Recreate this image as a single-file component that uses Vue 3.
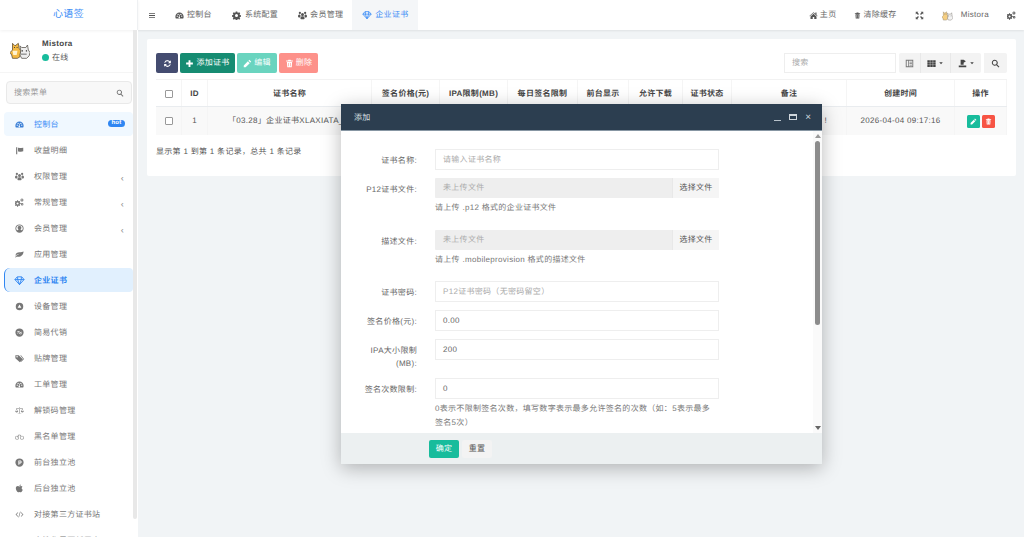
<script setup>
const P = {
  bars: 'M3 5h18v2.6H3zM3 10.7h18v2.6H3zM3 16.400h18V19H3z',
  dash: 'M12 4C5.900 4 1 8.900 1 15c0 1.800.4 3.400 1.200 5h19.600c.8-1.600 1.200-3.200 1.200-5 0-6.100-4.900-11-11-11zM6 15.500a1.700 1.700 0 1 1 0-3.400 1.700 1.700 0 0 1 0 3.400zm2.300-4.800a1.700 1.700 0 1 1 0-3.400 1.700 1.700 0 0 1 0 3.400zm5.300 6.300a2.200 2.200 0 1 1-3-2.100l1.300-5.500 1.500.4-1.300 5.300c.9.300 1.500 1 1.500 1.900zm2-6.300a1.700 1.700 0 1 1 0-3.400 1.700 1.700 0 0 1 0 3.400zm2.400 4.800a1.700 1.700 0 1 1 0-3.400 1.700 1.700 0 0 1 0 3.400z',
  gear: 'M10 1h4l.6 3 2 .9 2.600-1.700 2.800 2.800-1.700 2.600.8 2 3 .6v4l-3 .6-.8 2 1.700 2.600-2.800 2.800-2.600-1.700-2 .8-.6 3h-4l-.6-3-2-.8-2.600 1.700-2.800-2.800 1.700-2.600-.8-2-3-.6v-4l3-.6.8-2L2 6l2.800-2.800 2.600 1.700 2-.9zM12 8a4 4 0 1 0 0 8 4 4 0 0 0 0-8z',
  users: 'M12 5a4 4 0 1 1 0 8 4 4 0 0 1 0-8zM5 2a3 3 0 1 1 0 6 3 3 0 0 1 0-6zM19 2a3 3 0 1 1 0 6 3 3 0 0 1 0-6zM0 14c0-3 1.500-5 3.500-5 .8 0 1.600.3 2.200.9C6 12 7 13 8 13.500 6.500 14 5.500 15.300 5.300 17H2c-1.300 0-2-1-2-3zm24 0c0 2-.7 3-2 3h-3.300c-.2-1.700-1.200-3-2.700-3.500 1-.5 2-1.500 2.300-3.600.6-.6 1.400-.9 2.200-.9 2 0 3.500 2 3.500 5zM6.500 20c0-3.500 1.500-6 4-6h3c2.500 0 4 2.500 4 6 0 1.500-1 2-2 2h-7c-1 0-2-.5-2-2z',
  flag: 'M3 3h3v19H3zM8 5c3-1.200 5 .8 8 .2l6-.7v9.800l-6 .7c-3 .6-5-1.400-8-.2z',
  cogs: 'M8 6l.5 2 1.600.7 1.800-1 1.700 1.700-1 1.800.7 1.600 2 .5v2.400l-2 .5-.7 1.600 1 1.800-1.700 1.700-1.800-1-1.600.7-.5 2H5.600l-.5-2-1.600-.7-1.800 1L0 19.700l1-1.800-.7-1.600-2-.5v-2.400l2-.5.7-1.600-1-1.800 1.700-1.700 1.800 1 1.600-.7.5-2zm-1.200 6a2.800 2.800 0 1 0 0 5.600 2.800 2.800 0 0 0 0-5.600zM18.500 1a4 4 0 1 1 0 8 4 4 0 0 1 0-8zm0 2.600a1.400 1.400 0 1 0 0 2.800 1.400 1.400 0 0 0 0-2.800zM19 13a3.500 3.500 0 1 1 0 7 3.500 3.500 0 0 1 0-7zm0 2.300a1.200 1.200 0 1 0 0 2.400 1.200 1.200 0 0 0 0-2.400z',
  ucircle: 'M12 1a11 11 0 1 1 0 22 11 11 0 0 1 0-22zm0 2.300a8.700 8.700 0 0 0-6.700 14.300C6.300 15.800 8 15 9.500 14.500a5 5 0 1 1 5 0c1.500.5 3.200 1.300 4.200 3.100A8.700 8.700 0 0 0 12 3.300z',
  leaf: 'M23 4c-1 8-5 13-12 14-3 .4-5-.2-6-1-1 1-2 2-3 3l-1.500-1c2-3 6-7 12-9-5 .4-9 3-11 5C1 9 6 6 12 6c5 0 8-.5 11-2z',
  gem: 'M7 4h10l5 6-10 11L2 10zM2 10h20M8 10l4 11 4-11M8 4.500L8 10M16 4.500V10',
  circ: 'M12 2a10 10 0 1 1 0 20 10 10 0 0 1 0-20zm0 4.500l-5 9h10z',
  simple: 'M12 1a11 11 0 1 1 0 22 11 11 0 0 1 0-22zM6 9.500c2-2 4-2 6 0s4 2 6 0v2c-2 2-4 2-6 0s-4-2-6 0zM6 13.500c2-2 4-2 6 0s4 2 6 0v1.500c-2 2-4 2-6 0s-4-2-6 0z',
  tags: 'M1 3h9l11 11-8 8L1 11zM5.500 5.500a2 2 0 1 0 0 4 2 2 0 0 0 0-4z',
  tags2: 'M14 3h2l8 10.500-7 7-1.500-1.500 6-6z',
  scale: 'M11.300 3h1.400v16h4v1.300h-9.400V19h4zM3 6h18v1H3zM4.500 7l3.400 7h-1l-2.400-5-2.400 5h-1zM19.500 7l3.400 7h-1l-2.400-5-2.400 5h-1zM.5 14h8a4 3 0 0 1-8 0zM15.500 14h8a4 3 0 0 1-8 0z',
  bike: 'M5.500 10a5 5 0 1 1 0 10 5 5 0 0 1 0-10zm0 1.400a3.600 3.600 0 1 0 0 7.200 3.600 3.600 0 0 0 0-7.200zM18.500 10a5 5 0 1 1 0 10 5 5 0 0 1 0-10zm0 1.400a3.600 3.600 0 1 0 0 7.200 3.600 3.600 0 0 0 0-7.200zM9 7h5l3 5-1.200.7L13 8.400H10l-3 6-1.200-.7z',
  pcirc: 'M12 1a11 11 0 1 1 0 22 11 11 0 0 1 0-22zM9 6.500V18h2.600v-3.500h2c2.600 0 4-1.500 4-4s-1.400-4-4-4zm2.600 2.300h1.800c1.100 0 1.700.6 1.700 1.700s-.6 1.700-1.700 1.700h-1.800z',
  apple: 'M16 1c.1 2-1.700 4.400-4 4.300C11.800 3.200 13.800 1.200 16 1zM12 6.500c1 0 2.300-1 4-1 1.500 0 3 .7 4 2-3.300 2-2.700 6.600.8 8-.9 2.500-3 6.500-5 6.500-1.500 0-2-1-3.800-1s-2.300 1-3.800 1c-2.700 0-6-6-6-10.500 0-4 2.600-6 5-6 1.900 0 3.600 1 4.800 1z',
  code: 'M7.500 6l1 1.200L4 12l4.500 4.800-1 1.200L1.500 12zM16.500 6l-1 1.200L20 12l-4.500 4.800 1 1.200 6-6zM13.500 4l1.400.4-4.400 15.600-1.400-.4z',
  home: 'M12 3l5 4.500V4h3v6.200l3 2.800-1.200 1.300L12 5.500 2.200 14.300 1 13zM12 7.500l8 7V21h-6v-5h-4v5H4v-6.500z',
  trash: 'M9 2h6l1 2h5v2.500H3V4h5zM5 8h14l-1 14H6zM9 10.500v9h1.500v-9zm4.500 0v9H15v-9z',
  arrows: 'M2 2h7L6.700 4.300 10.500 8 8 10.500 4.300 6.700 2 9zM22 2v7l-2.300-2.300L16 10.500 13.500 8l3.800-3.700L15 2zM2 22v-7l2.300 2.300L8 13.500l2.500 2.500-3.800 3.700L9 22zM22 22h-7l2.300-2.300-3.800-3.700 2.500-2.500 3.700 3.800L22 15z',
  refresh: 'M12 3c2.600 0 4.900 1.100 6.500 2.800L21 3.500V11h-7.500l3-3A6.500 6.500 0 0 0 5.800 10H3.200A9 9 0 0 1 12 3zM3 13h7.500l-3 3a6.500 6.500 0 0 0 10.700-2h2.600A9 9 0 0 1 5.500 18.200L3 20.500z',
  plus: 'M9.500 3h5v6.500H21v5h-6.500V21h-5v-6.500H3v-5h6.500z',
  pencil: 'M17 2l5 5-2.500 2.500-5-5zM13 6l5 5L7 22H2v-5z',
  table: 'M2 2h20v20H2zm2.500 2.500v15h4v-15zm6 0v15h9v-15z M12 7h6.500v2H12zM12 11h6.500v2H12zM12 15h6.500v2H12z',
  grid: 'M1 3h6.600v5.500H1zM8.700 3h6.600v5.500H8.700zM16.400 3H23v5.500h-6.600zM1 9.500h6.600V15H1zM8.700 9.500h6.600V15H8.700zM16.400 9.500H23V15h-6.600zM1 16h6.600v5.500H1zM8.700 16h6.600v5.500H8.700zM16.400 16H23v5.500h-6.600z',
  exp: 'M7 2h8l6 4-6 4v5h-8zM2 17h20v5H2z',
  search: 'M10 2a8 8 0 0 1 6.400 12.800l6 6-2.100 2.100-6-6A8 8 0 1 1 10 2zm0 2.800a5.200 5.200 0 1 0 0 10.400 5.200 5.200 0 0 0 0-10.400z',
  caret: 'M5 9h14l-7 8z'
}

const menu = [
  { t: '控制台', i: 'dash', hot: true, cls: 'soft' },
  { t: '收益明细', i: 'flag' },
  { t: '权限管理', i: 'users', arrow: true },
  { t: '常规管理', i: 'cogs', arrow: true },
  { t: '会员管理', i: 'ucircle', arrow: true },
  { t: '应用管理', i: 'leaf' },
  { t: '企业证书', i: 'gem', cls: 'active', stroke: true },
  { t: '设备管理', i: 'circ' },
  { t: '简易代销', i: 'simple' },
  { t: '贴牌管理', i: 'tags', extra: 'tags2' },
  { t: '工单管理', i: 'dash' },
  { t: '解锁码管理', i: 'scale' },
  { t: '黑名单管理', i: 'bike' },
  { t: '前台独立池', i: 'pcirc' },
  { t: '后台独立池', i: 'apple' },
  { t: '对接第三方证书站', i: 'code' },
  { t: '个性化界面新用户', i: 'code' }
]

const columns = [
  { w: 26, t: '', check: true },
  { w: 26, t: 'ID', v: '1' },
  { w: 164, t: '证书名称', v: '「03.28」企业证书XLAXIATA_', left: true },
  { w: 68, t: '签名价格(元)', v: '' },
  { w: 68, t: 'IPA限制(MB)', v: '' },
  { w: 70, t: '每日签名限制', v: '' },
  { w: 51, t: '前台显示', v: '' },
  { w: 54, t: '允许下载', v: '' },
  { w: 49, t: '证书状态', v: '' },
  { w: 115, t: '备注', v: '!', right: true },
  { w: 108, t: '创建时间', v: '2026-04-04 09:17:16' },
  { w: 52, t: '操作', ops: true }
]
</script>

<template>
  <div class="page">
    <aside class="side">
      <div class="logo">心语签</div>
      <div class="side-body">
        <div class="side-inner">
          <div class="user">
            <svg class="avatar" viewBox="0 0 24 24">
              <path d="M3 4l3 3 4-3 1 6 2 3-1 7-3 2H3l-1-4-2-3 3-3z" fill="#f4b942" stroke="#5a4a30" stroke-width=".9" />
              <path d="M3 13h6l-1 5H4z" fill="#fff3d0" />
              <path d="M12 7l2 2h5l2-3 1 6 2 3-1 4-3 3h-6l-2-4 1-5z" fill="#eeeeee" stroke="#55504a" stroke-width=".9" />
              <path d="M14 13h1.500M19 13h1.500M5 9h1M8 9h1" stroke="#333" stroke-width="1.300" fill="none" />
              <path d="M13 17h7" stroke="#888" stroke-width="1.500" fill="none" />
            </svg>
            <div class="user-info">
              <div class="user-name">Mistora</div>
              <div class="user-status"><i class="dot"></i>在线</div>
            </div>
          </div>
          <div class="side-search">
            <span>搜索菜单</span>
            <svg class="ico" viewBox="0 0 24 24"><path :d="P.search" /></svg>
          </div>
          <nav class="menu">
            <div v-for="m in menu" :key="m.t" class="menu-item" :class="m.cls">
              <span class="menu-slot">
                <svg class="ico menu-ico" :class="{ 'ico-gem': m.stroke }" viewBox="0 0 24 24">
                  <path v-if="m.stroke" :d="P[m.i]" fill="none" stroke="currentColor" stroke-width="2" />
                  <path v-else :d="P[m.i]" />
                  <path v-if="m.extra" :d="P[m.extra]" />
                </svg>
              </span>
              <span class="menu-text">{{ m.t }}</span>
              <span v-if="m.hot" class="hot">hot</span>
              <span v-if="m.arrow" class="arrow">‹</span>
            </div>
          </nav>
        </div>
        <div class="side-scroll"><div class="side-thumb"></div></div>
      </div>
    </aside>

    <div class="main">
      <header class="top">
        <svg class="ico top-bars" viewBox="0 0 24 24"><path :d="P.bars" /></svg>
        <div class="tab"><svg class="ico" viewBox="0 0 24 24"><path :d="P.dash" /></svg>控制台</div>
        <div class="tab tab-gear"><svg class="ico" viewBox="0 0 24 24"><path :d="P.gear" /></svg>系统配置</div>
        <div class="tab"><svg class="ico" viewBox="0 0 24 24"><path :d="P.users" /></svg>会员管理</div>
        <div class="tab tab-on"><svg class="ico" viewBox="0 0 24 24"><path :d="P.gem" fill="none" stroke="currentColor" stroke-width="2" /></svg>企业证书</div>
        <div class="top-right">
          <div class="tr"><svg class="ico" viewBox="0 0 24 24"><path :d="P.home" /></svg>主页</div>
          <div class="tr"><svg class="ico ico-trash" viewBox="0 0 24 24"><path :d="P.trash" /></svg>清除缓存</div>
          <div class="tr"><svg class="ico" viewBox="0 0 24 24"><path :d="P.arrows" /></svg></div>
          <div class="tr tr-user">
            <svg class="avatar-sm" viewBox="0 0 24 24">
              <path d="M3 4l3 3 4-3 1 6 2 3-1 7-3 2H3l-1-4-2-3 3-3z" fill="#f6cf82" stroke="#8a7a60" stroke-width=".9" />
              <path d="M12 7l2 2h5l2-3 1 6 2 3-1 4-3 3h-6l-2-4 1-5z" fill="#f2f2f2" stroke="#77726a" stroke-width=".9" />
              <path d="M14 13h1.500M19 13h1.500M5 9h1M8 9h1" stroke="#555" stroke-width="1.300" fill="none" />
            </svg>
            Mistora
          </div>
          <div class="tr"><svg class="ico" viewBox="0 0 24 24"><path :d="P.cogs" /></svg></div>
        </div>
      </header>

      <main class="content">
        <section class="panel">
          <div class="toolbar">
            <button class="btn b-navy"><svg class="ico" viewBox="0 0 24 24"><path :d="P.refresh" /></svg></button>
            <button class="btn b-green"><svg class="ico" viewBox="0 0 24 24"><path :d="P.plus" /></svg>添加证书</button>
            <button class="btn b-mint"><svg class="ico" viewBox="0 0 24 24"><path :d="P.pencil" /></svg>编辑</button>
            <button class="btn b-red"><svg class="ico" viewBox="0 0 24 24"><path :d="P.trash" /></svg>删除</button>
            <div class="tools">
              <div class="tsearch">搜索</div>
              <div class="tgroup">
                <span class="tg tg-a"><svg class="ico ico-soft" viewBox="0 0 24 24"><path :d="P.table" /></svg></span>
                <span class="tg tg-b"><svg class="ico" viewBox="0 0 24 24"><path :d="P.grid" /></svg><svg class="ico caret" viewBox="0 0 24 24"><path :d="P.caret" /></svg></span>
                <span class="tg tg-b"><svg class="ico" viewBox="0 0 24 24"><path :d="P.exp" /></svg><svg class="ico caret" viewBox="0 0 24 24"><path :d="P.caret" /></svg></span>
              </div>
              <span class="tg tsingle"><svg class="ico" viewBox="0 0 24 24"><path :d="P.search" /></svg></span>
            </div>
          </div>
          <div class="table">
            <div class="tr-h">
              <div v-for="c in columns" :key="c.t" class="th" :style="{ width: c.w + 'px' }">
                <i v-if="c.check" class="check"></i>{{ c.t }}
              </div>
            </div>
            <div class="tr-b">
              <div v-for="c in columns" :key="c.t" class="td" :class="{ 'td-right': c.right, 'td-left': c.left }" :style="{ width: c.w + 'px' }">
                <i v-if="c.check" class="check"></i>
                <template v-else-if="c.ops">
                  <span class="op op-g"><svg class="ico" viewBox="0 0 24 24"><path :d="P.pencil" /></svg></span>
                  <span class="op op-r"><svg class="ico" viewBox="0 0 24 24"><path :d="P.trash" /></svg></span>
                </template>
                <template v-else>{{ c.v }}</template>
              </div>
            </div>
          </div>
          <div class="summary">显示第 1 到第 1 条记录，总共 1 条记录</div>
        </section>
      </main>
    </div>

    <div class="modal">
      <div class="m-head">
        <span>添加</span>
        <div class="m-ctrl">
          <i class="c-min"></i>
          <i class="c-max"></i>
          <span class="c-x">×</span>
        </div>
      </div>
      <div class="m-body">
        <div class="form">
          <div class="row">
            <label>证书名称:</label>
            <div class="f"><div class="input ph">请输入证书名称</div></div>
          </div>
          <div class="row">
            <label>P12证书文件:</label>
            <div class="f">
              <div class="upload"><div class="up-l">未上传文件</div><div class="up-r">选择文件</div></div>
              <p class="help">请上传 .p12 格式的企业证书文件</p>
            </div>
          </div>
          <div class="row">
            <label>描述文件:</label>
            <div class="f">
              <div class="upload"><div class="up-l">未上传文件</div><div class="up-r">选择文件</div></div>
              <p class="help">请上传 .mobileprovision 格式的描述文件</p>
            </div>
          </div>
          <div class="row">
            <label>证书密码:</label>
            <div class="f"><div class="input ph">P12证书密码（无密码留空）</div></div>
          </div>
          <div class="row">
            <label>签名价格(元):</label>
            <div class="f"><div class="input">0.00</div></div>
          </div>
          <div class="row">
            <label>IPA大小限制(MB):</label>
            <div class="f"><div class="input">200</div></div>
          </div>
          <div class="row">
            <label>签名次数限制:</label>
            <div class="f">
              <div class="input">0</div>
              <p class="help help-wide">0表示不限制签名次数，填写数字表示最多允许签名的次数（如：5表示最多签名5次）</p>
            </div>
          </div>
        </div>
        <div class="m-scroll">
          <i class="up"></i>
          <div class="m-track"><div class="m-thumb"></div></div>
          <i class="down"></i>
        </div>
      </div>
      <div class="m-foot">
        <button class="mb mb-ok">确定</button>
        <button class="mb mb-reset">重置</button>
      </div>
    </div>
  </div>
</template>

<style>
html, body { margin: 0; padding: 0; overflow: hidden; }
</style>

<style scoped>
.page {
  position: relative; display: flex; width: 1024px; height: 537px; overflow: hidden;
  background: #f1f4f6; color: #666;
  font: 8px/12px "Liberation Sans", "Noto Sans CJK SC", sans-serif;
  letter-spacing: .3px; text-rendering: geometricPrecision;
}
button { letter-spacing: .3px; text-rendering: geometricPrecision; }
.ico { width: 9px; height: 9px; fill: currentColor; fill-rule: evenodd; flex: none; display: block; }
.ico-trash { width: 7px; }

.side { width: 138px; flex: none; display: flex; flex-direction: column; background: #fff; box-sizing: border-box; height: 537px; z-index: 2; }
.logo { height: 30px; flex: none; display: flex; align-items: center; justify-content: center; color: #3b8df6; font-size: 10px; box-shadow: 0 1px 3px rgba(0,0,0,.06); border-right: 1px solid #eef0f2; box-sizing: border-box; }
.side-body { flex: 1; display: flex; min-height: 0; }
.side-inner { width: 133px; flex: none; overflow: hidden; }
.side-scroll { width: 5px; flex: none; background: #fff; }
.side-thumb { width: 4px; height: 489px; background: #e8e8e8; border-radius: 0 0 2px 2px; }
.user { height: 43px; box-sizing: border-box; display: flex; align-items: center; padding: 0 0 2px 10px; border-bottom: 1px solid #f5f5f5; }
.avatar { width: 20px; height: 20px; flex: none; }
.user-info { margin-left: 12px; }
.user-name { font-weight: 700; color: #444; line-height: 14px; }
.user-status { display: flex; align-items: center; gap: 3px; color: #555; line-height: 13px; }
.dot { width: 7px; height: 7px; border-radius: 50%; background: #18bc9c; }
.side-search { margin: 8px 1px 0 6px; height: 23px; box-sizing: border-box; border: 1px solid #e9e9e9; border-radius: 4px; background: #f8f8f8; display: flex; align-items: center; justify-content: space-between; padding: 0 7px; color: #999; }
.side-search .ico { color: #777; width: 8px; height: 8px; }
.menu { padding: 8px 0 0 4px; display: flex; flex-direction: column; gap: 2px; }
.menu-item { height: 24px; flex: none; display: flex; align-items: center; padding-left: 10px; border-radius: 4px; box-sizing: border-box; color: #777; position: relative; }
.menu-slot { width: 10px; margin-right: 10px; display: flex; justify-content: center; flex: none; }
.menu-ico { color: #777; }
.ico-gem { width: 11px; height: 11px; }
.menu-text { white-space: nowrap; padding-top: 1px; }
.menu-item.soft { background: #f0f8ff; color: #3b8df6; }
.menu-item.soft .menu-ico { color: #3b7fd6; }
.menu-item.active { background: #e1f0fe; color: #2f86f2; font-weight: 700; border-left: 1px solid #2f86f2; padding-left: 9px; border-radius: 6px 4px 4px 6px; }
.menu-item.active .menu-ico { color: #2f86f2; }
.hot { position: absolute; right: 8px; top: 8px; height: 7px; width: 17px; border-radius: 4px; background: #2f86f2; color: #fff; font: 700 6px/7px "Liberation Sans", sans-serif; text-align: center; }
.arrow { position: absolute; right: 9px; top: 8px; font-size: 9px; color: #888; }

.main { flex: 1; min-width: 0; display: flex; flex-direction: column; }
.top { height: 30px; flex: none; background: #fff; display: flex; align-items: center; box-shadow: 0 1px 2px rgba(0,0,0,.08); position: relative; color: #666; box-sizing: border-box; padding-left: 10px; }
.top-bars { margin-right: 19px; color: #555; width: 8px; height: 9px; }
.tab { height: 30px; display: flex; align-items: center; gap: 3px; margin-right: 20px; white-space: nowrap; }
.tab .ico { color: #555; }
.tab-gear { gap: 4px; }
.tab-on { background: #f4f6f8; color: #3b8df6; padding: 0 9px 0 10px; margin-left: -11px; margin-right: 0; }
.tab-on .ico { color: #3b8df6; width: 10px; height: 10px; }
.top-right { margin-left: auto; display: flex; align-items: center; padding-right: 8px; }
.tr { display: flex; align-items: center; gap: 2px; margin-right: 18px; white-space: nowrap; }
.tr:last-child { margin-right: 0; }
.tr .ico { color: #555; }
.tr-user { gap: 8px; }
.avatar-sm { width: 11px; height: 11px; }

.content { flex: 1; padding: 9px 8px 0 9px; }
.panel { background: #fff; height: 137px; box-sizing: border-box; padding: 14px 9px 0 9px; border-radius: 2px; }
.toolbar { display: flex; align-items: center; gap: 2px; height: 20px; }
.btn { height: 20px; border: 0; border-radius: 2px; color: #fff; font: 8px/20px "Liberation Sans", "Noto Sans CJK SC", sans-serif; display: flex; align-items: center; gap: 2px; padding: 0; justify-content: center; }
.b-navy { background: #444c70; width: 22px; }
.b-green { background: #168c72; width: 55px; }
.b-mint { background: #6ad4bf; width: 40px; }
.b-red { background: #fd918a; width: 39px; }
.tools { margin-left: auto; display: flex; align-items: center; }
.tsearch { width: 112px; height: 20px; box-sizing: border-box; border: 1px solid #eee; padding: 0 7px; line-height: 18px; color: #aaa; margin-right: 3px; }
.tgroup { display: flex; }
.tg { height: 20px; background: #f3f3f3; display: flex; align-items: center; justify-content: center; gap: 2px; color: #444; box-sizing: border-box; border-right: 1px solid #e8e8e8; }
.tg-a { width: 22px; }
.tg-b { width: 30px; }
.tg .caret { width: 6px; height: 6px; }
.ico-soft { color: #777; }
.tg:first-child { border-radius: 2px 0 0 2px; }
.tg:last-child { border-radius: 0 2px 2px 0; border-right: 0; }
.tsingle { margin-left: 3px; width: 23px; border-radius: 2px; border: 0; }

.table { margin-top: 6px; border-top: 1px solid #f2f2f2; width: 851px; }
.tr-h { display: flex; height: 27px; border-bottom: 1px solid #e9ecef; box-sizing: border-box; }
.th { flex: none; box-sizing: border-box; display: flex; align-items: center; justify-content: center; font-weight: 700; color: #444; border-right: 1px solid #f5f5f5; white-space: nowrap; padding-top: 1px; }
.tr-b { display: flex; height: 28px; background: #f9f9f9; }
.td { flex: none; box-sizing: border-box; display: flex; align-items: center; justify-content: center; gap: 2px; color: #555; border-right: 1px solid #f5f5f5; white-space: nowrap; overflow: hidden; }
.td-right { justify-content: flex-end; padding-right: 19px; }
.td-left { justify-content: flex-start; padding-left: 20px; }
.check { width: 6px; height: 6px; border: 1px solid #999; border-radius: 1px; background: #fff; display: block; }
.op { width: 13px; height: 13px; border-radius: 1.500px; display: flex; align-items: center; justify-content: center; color: #fff; }
.op .ico { width: 7px; height: 7px; }
.op-g { background: #18bc9c; }
.op-r { background: #f75444; }
.summary { margin-top: 11px; color: #555; }

.modal { position: absolute; left: 341px; top: 104px; width: 481px; height: 360px; background: #fff; display: flex; flex-direction: column; box-shadow: 0 4px 18px rgba(0,0,0,.28); z-index: 5; }
.m-head { height: 27px; flex: none; background: #2c3e50; color: #dfe4e8; display: flex; align-items: center; justify-content: space-between; padding: 1px 11px 0 13px; box-sizing: border-box; border-bottom: 1px solid #8796a3; }
.m-ctrl { display: flex; align-items: center; gap: 8px; }
.c-min { width: 7px; height: 1px; background: #b8c2cb; margin-top: 5px; }
.c-max { width: 6px; height: 3px; border: 1px solid #cfd6dc; border-top-width: 2px; margin-top: -1px; }
.c-x { font-size: 10px; line-height: 10px; color: #cfd6dc; letter-spacing: 0; }
.m-body { flex: 1; min-height: 0; display: flex; overflow: hidden; }
.form { flex: 1; min-width: 0; padding-top: 18px; box-sizing: border-box; overflow: hidden; }
.row { display: flex; margin-bottom: 8px; }
.row label { width: 60px; margin-left: 16px; flex: none; text-align: right; line-height: 13px; padding-top: 5px; color: #666; }
.f { margin-left: 18px; width: 284px; flex: none; }
.input { height: 21px; box-sizing: border-box; border: 1px solid #eee; padding: 0 7px; line-height: 19px; color: #666; }
.ph { color: #aaa; }
.upload { display: flex; height: 20px; }
.up-l { flex: 1; background: #eee; color: #aaa; line-height: 20px; padding: 0 8px; border-radius: 1px 0 0 1px; }
.up-r { width: 47px; background: #f5f5f5; color: #555; text-align: center; line-height: 20px; border-left: 1px solid #e8e8e8; box-sizing: border-box; }
.help { margin: 3px 0 7px; line-height: 13.500px; color: #777; }
.help-wide { width: 280px; margin: 3px 0 0; }
.m-scroll { width: 9px; flex: none; display: flex; flex-direction: column; align-items: center; background: #fafafa; }
.up, .down { width: 0; height: 0; border-left: 3px solid transparent; border-right: 3px solid transparent; flex: none; }
.up { border-bottom: 4px solid #999; margin-top: 3px; }
.down { border-top: 4px solid #666; margin-bottom: 3px; }
.m-track { flex: 1; width: 100%; padding-top: 3px; }
.m-thumb { width: 5px; height: 184px; margin: 0 auto; background: #8c8c8c; border-radius: 3px; }
.m-foot { height: 31px; flex: none; background: #ecf0f1; display: flex; align-items: center; padding-left: 88px; gap: 3px; box-sizing: border-box; }
.mb { height: 18px; border: 0; border-radius: 2px; font: 8px/18px "Liberation Sans", "Noto Sans CJK SC", sans-serif; padding: 0; width: 30px; }
.mb-ok { background: #18bc9c; color: #fff; }
.mb-reset { background: #f3f3f3; color: #555; }
</style>
